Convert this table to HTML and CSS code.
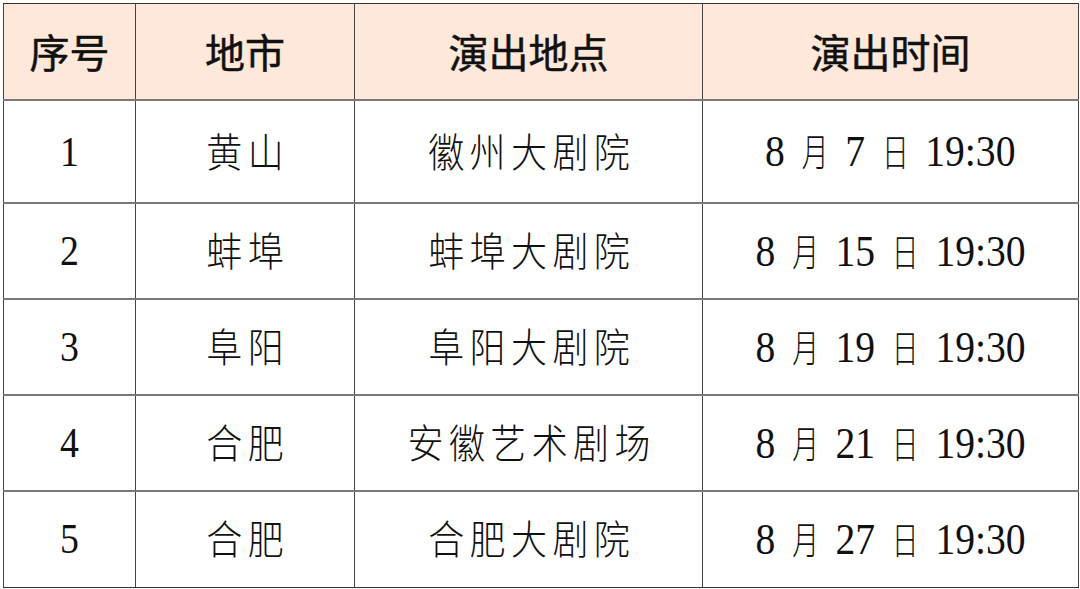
FILE: index.html
```html
<!DOCTYPE html>
<html lang="zh-CN">
<head>
<meta charset="utf-8">
<link rel="stylesheet" href="styles.css">
</head>
<body>
<table class="sched">
  <colgroup>
    <col class="c1"><col class="c2"><col class="c3"><col class="c4">
  </colgroup>
  <thead>
    <tr class="head">
      <th>序号</th><th>地市</th><th>演出地点</th><th>演出时间</th>
    </tr>
  </thead>
  <tbody>
    <tr class="r1">
      <td><span class="t">1</span></td>
      <td><span class="t cn">黄山</span></td>
      <td><span class="t cn">徽州大剧院</span></td>
      <td><span class="t tm">8 <span class="cj">月</span> 7 <span class="cj">日</span> 19:30</span></td>
    </tr>
    <tr>
      <td><span class="t">2</span></td>
      <td><span class="t cn">蚌埠</span></td>
      <td><span class="t cn">蚌埠大剧院</span></td>
      <td><span class="t tm">8 <span class="cj">月</span> 15 <span class="cj">日</span> 19:30</span></td>
    </tr>
    <tr>
      <td><span class="t">3</span></td>
      <td><span class="t cn">阜阳</span></td>
      <td><span class="t cn">阜阳大剧院</span></td>
      <td><span class="t tm">8 <span class="cj">月</span> 19 <span class="cj">日</span> 19:30</span></td>
    </tr>
    <tr>
      <td><span class="t">4</span></td>
      <td><span class="t cn">合肥</span></td>
      <td><span class="t cn">安徽艺术剧场</span></td>
      <td><span class="t tm">8 <span class="cj">月</span> 21 <span class="cj">日</span> 19:30</span></td>
    </tr>
    <tr>
      <td><span class="t">5</span></td>
      <td><span class="t cn">合肥</span></td>
      <td><span class="t cn">合肥大剧院</span></td>
      <td><span class="t tm">8 <span class="cj">月</span> 27 <span class="cj">日</span> 19:30</span></td>
    </tr>
  </tbody>
</table>
</body>
</html>
```

FILE: styles.css
```css
html, body {
  margin: 0;
  padding: 0;
  background: #ffffff;
}

body {
  padding: 3px 0 0 3px;
}

.sched {
  border-collapse: collapse;
  table-layout: fixed;
  width: 1075px;
  height: 583px;
  border: 1px solid #333;
}

.c1 { width: 132px; }
.c2 { width: 219px; }
.c3 { width: 348px; }
.c4 { width: 376px; }

.sched th,
.sched td {
  padding: 0;
  text-align: center;
  vertical-align: middle;
  border-left: 1px solid #444;
  border-right: 1px solid #444;
  border-top: 2px solid #7a7a7a;
  border-bottom: 2px solid #7a7a7a;
  color: #111;
  overflow: hidden;
  white-space: nowrap;
}

.head th {
  height: 93px;
  background: #fde8da;
  border-top: 1px solid #333;
  font-family: "Noto Sans CJK SC", "Noto Sans", sans-serif;
  font-weight: 400;
  font-size: 40px;
  line-height: 1;
  padding-bottom: 2px;
  -webkit-text-stroke: 0.5px #111;
}

.sched tbody tr { height: 96px; }
.sched tbody tr.r1 { height: 103px; }
.sched tbody tr:last-child td { border-bottom: 1px solid #333; }

.sched td {
  font-family: "Liberation Serif", "Noto Sans CJK SC", serif;
  font-weight: 300;
  font-size: 42px;
  line-height: 1;
}

.t {
  display: inline-block;
  transform: scaleX(0.9);
}

.tm {
  font-size: 45px;
  transform: scaleX(0.88);
}

.cn {
  font-family: "Noto Sans CJK SC", sans-serif;
  font-weight: 300;
  font-size: 40px;
  letter-spacing: 6px;
  padding-left: 6px;
}

.cj {
  font-family: "Noto Sans CJK SC", sans-serif;
  font-weight: 300;
  font-size: 38px;
  display: inline-block;
  transform: scaleX(0.8);
  margin: 0 4px;
}
```
